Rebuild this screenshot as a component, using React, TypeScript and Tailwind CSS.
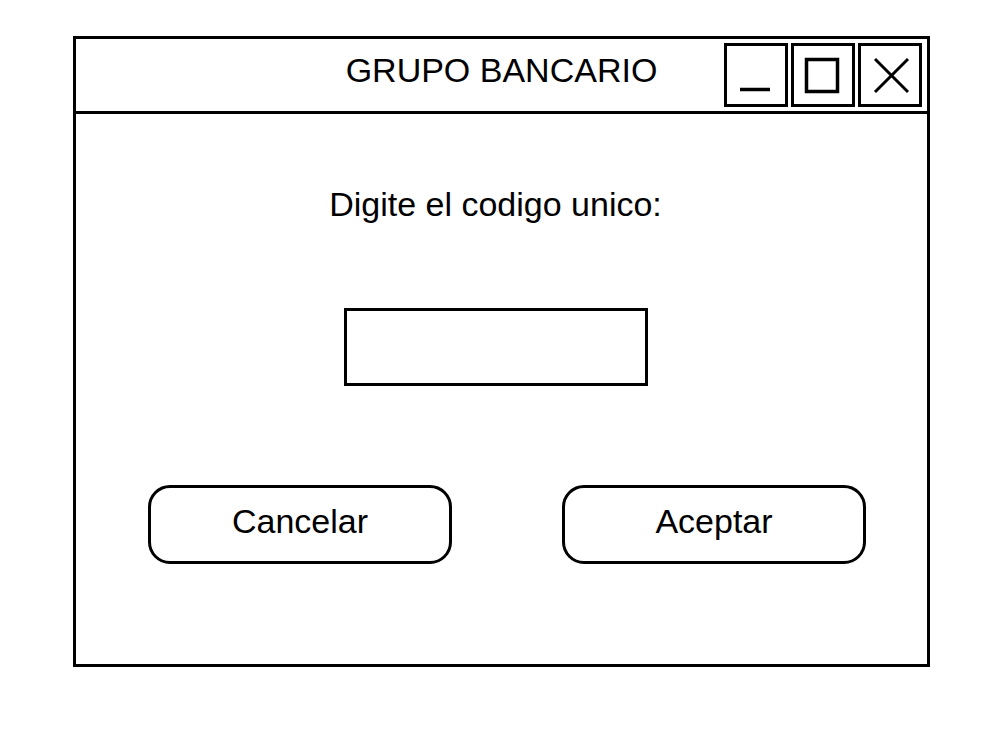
import React from "react";

export default function App() {
  return (
    <div className="w-[1003px] h-[741px] bg-white pt-[36px] pl-[73px]" style={{ fontFamily: '"Liberation Sans", Arial, sans-serif' }}>
      <div className="w-[857px] h-[631px] border-[3px] border-black flex flex-col text-black">
        {/* Title bar */}
        <div className="h-[75px] border-b-[3px] border-black grid grid-cols-[1fr_auto_1fr]">
          <div />
          <div className="text-[34px] leading-none pt-[14px] whitespace-nowrap">GRUPO BANCARIO</div>
          <div className="flex justify-end items-start pt-[4px] pr-[5px] gap-[3px]">
            <div className="w-[64px] h-[64px] border-[3px] border-black">
              <svg width="58" height="58" viewBox="0 0 58 58">
                <line x1="13" y1="43.5" x2="43" y2="43.5" stroke="black" strokeWidth="3.5" />
              </svg>
            </div>
            <div className="w-[64px] h-[64px] border-[3px] border-black">
              <svg width="58" height="58" viewBox="0 0 58 58">
                <rect x="12.5" y="13.5" width="31" height="32" fill="none" stroke="black" strokeWidth="3.5" />
              </svg>
            </div>
            <div className="w-[64px] h-[64px] border-[3px] border-black">
              <svg width="58" height="58" viewBox="0 0 58 58">
                <line x1="14" y1="13" x2="47" y2="46" stroke="black" strokeWidth="3" />
                <line x1="47" y1="13" x2="14" y2="46" stroke="black" strokeWidth="3" />
              </svg>
            </div>
          </div>
        </div>
        {/* Body */}
        <div className="flex-1 flex flex-col items-center pr-[12px]">
          <div className="mt-[70px] text-[34px] leading-[40px] whitespace-nowrap">Digite el codigo unico:</div>
          <div className="mt-[84px] w-[304px] h-[78px] border-[3px] border-black bg-white" />
          <div className="mt-[99px] self-start flex pl-[72px] gap-[110px]">
            <div className="w-[304px] h-[79px] border-[3px] border-black rounded-[22px] flex items-center justify-center pb-[8px] text-[34px] leading-none">
              Cancelar
            </div>
            <div className="w-[304px] h-[79px] border-[3px] border-black rounded-[22px] flex items-center justify-center pb-[8px] text-[34px] leading-none">
              Aceptar
            </div>
          </div>
        </div>
      </div>
    </div>
  );
}
